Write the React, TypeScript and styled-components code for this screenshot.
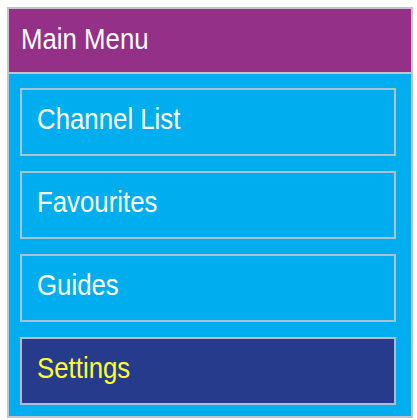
import React from "react";
import styled, { createGlobalStyle } from "styled-components";

const GlobalStyle = createGlobalStyle`
  html, body { margin: 0; padding: 0; background: #ffffff; }
  body { font-family: "Liberation Sans", Arial, sans-serif; }
`;

const Frame = styled.div`
  margin: 7px 0 0 7px;
  width: 406px;
  box-sizing: border-box;
  border: 2px solid #c4c4cc;
  background: #00aeef;
`;

const Header = styled.div`
  height: 65px;
  box-sizing: border-box;
  background: #943087;
  border-bottom: 2px solid #c4c4cc;
  display: flex;
  align-items: center;
  padding: 0 0 4px 12px;
`;

const Label = styled.span<{ $color?: string }>`
  display: inline-block;
  font-family: "Liberation Sans", Arial, sans-serif;
  font-size: 30px;
  line-height: 1;
  color: ${(p) => p.$color ?? "#ffffff"};
  transform: scaleX(0.86);
  transform-origin: left center;
  white-space: nowrap;
`;

const Body = styled.div`
  display: flex;
  flex-direction: column;
  gap: 15px;
  padding: 14px 15px 11px 11px;
`;

const Item = styled.div<{ $selected?: boolean }>`
  height: 68px;
  box-sizing: border-box;
  border: 2px solid ${(p) => (p.$selected ? "#b4bccb" : "#a9c3d5")};
  background: ${(p) => (p.$selected ? "#263b8c" : "#00aeef")};
  display: flex;
  align-items: center;
  padding: 0 0 6px 15px;
`;

const items = [
  { label: "Channel List" },
  { label: "Favourites" },
  { label: "Guides" },
  { label: "Settings", selected: true },
];

export default function App() {
  return (
    <>
      <GlobalStyle />
      <Frame>
        <Header>
          <Label>Main Menu</Label>
        </Header>
        <Body>
          {items.map((it) => (
            <Item key={it.label} $selected={it.selected}>
              <Label $color={it.selected ? "#ffff33" : "#ffffff"}>{it.label}</Label>
            </Item>
          ))}
        </Body>
      </Frame>
    </>
  );
}
